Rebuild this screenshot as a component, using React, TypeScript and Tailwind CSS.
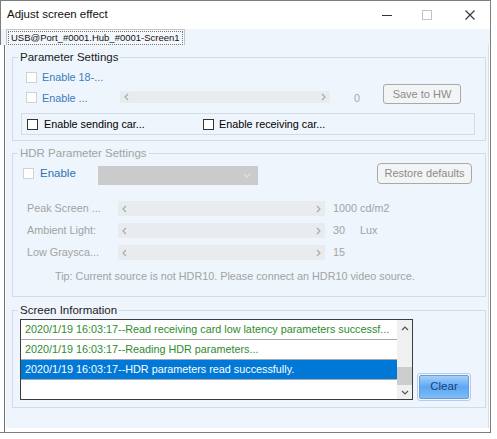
import React from "react";

const font = { fontFamily: '"Liberation Sans", Arial, sans-serif' };

function Chevron({ dir, className }: { dir: "left" | "right" | "up" | "down"; className?: string }) {
  const d = {
    left: "M4 1 L1 4 L4 7",
    right: "M1 1 L4 4 L1 7",
    up: "M1 4 L4 1 L7 4",
    down: "M1 1 L4 4 L7 1",
  }[dir];
  const vertical = dir === "up" || dir === "down";
  return (
    <svg width={vertical ? 8 : 5} height={vertical ? 5 : 8} viewBox={vertical ? "0 0 8 5" : "0 0 5 8"} className={className}>
      <path d={d} fill="none" stroke="currentColor" strokeWidth="1.2" />
    </svg>
  );
}

// disabled scroll-style slider
function Track({ w, h }: { w: string; h: string }) {
  return (
    <div className={`${w} ${h} flex items-center justify-between bg-[#e9ecef] px-[4px] text-[#a9a9a9]`}>
      <Chevron dir="left" />
      <Chevron dir="right" />
    </div>
  );
}

function Box({ dark }: { dark?: boolean }) {
  return dark ? (
    <span className="block h-[11px] w-[11px] shrink-0 border border-[#333] bg-white" />
  ) : (
    <span className="block h-[11px] w-[11px] shrink-0 border border-[#cfd3d7] bg-white" />
  );
}

const logs = [
  "2020/1/19 16:03:17--Read receiving card low latency parameters successf...",
  "2020/1/19 16:03:17--Reading HDR parameters...",
  "2020/1/19 16:03:17--HDR parameters read successfully.",
];

export default function App() {
  return (
    <div className="h-[439px] w-[497px] bg-white text-[10.8px] text-black" style={font}>
      <div className="flex h-[433px] w-[491px] flex-col border-y border-r border-[#7d7d7d]">
        {/* title bar */}
        <div className="flex h-[28px] shrink-0 items-center border-l border-[#7d7d7d] bg-white pl-[6px]">
          <span className="text-[11.5px] text-[#111]">Adjust screen effect</span>
          <div className="ml-auto flex items-center">
            <span className="mr-[30px] block h-px w-[10px] bg-[#333]" />
            <span className="mr-[33px] block h-[10px] w-[10px] border border-[#c4c4c4]" />
            <svg width="10" height="10" viewBox="0 0 10 10" className="mr-[15px]">
              <path d="M0.5 0.5 L9.5 9.5 M9.5 0.5 L0.5 9.5" stroke="#333" strokeWidth="1.1" />
            </svg>
          </div>
        </div>

        {/* tab strip */}
        <div className="flex h-[16px] shrink-0 items-end border-l border-[#7d7d7d] bg-[#eef5fc] pl-[5px]">
          <div className="flex h-[16px] items-center border border-b-0 border-[#c4c4c4] bg-[#f4f8fc] px-[1px]">
            <span className="border border-dotted border-[#777] px-[2px] text-[9.5px] leading-[12px] text-[#111]">
              USB@Port_#0001.Hub_#0001-Screen1
            </span>
          </div>
        </div>

        {/* tab body */}
        <div className="ml-[4px] flex flex-1 border-l border-[#6f6f6f] bg-white pb-[4px] pl-[1px] pr-[1px]">
          <div className="flex flex-1 flex-col border-r border-[#dcdcdc] bg-[#eef5fc] pl-[6px] pr-[2px] pt-[5px]">
            {/* Parameter Settings */}
            <fieldset className="border border-[#d3dce5] pb-[5px] pl-[8px]">
              <legend className="ml-[-3px] px-[2px] text-[11.5px] leading-[14px] text-[#222]">Parameter Settings</legend>
              <div className="mt-[6px] flex h-[14px] items-center pl-[5px]">
                <Box />
                <span className="ml-[5px] text-[#3a7cc2]">Enable 18-...</span>
              </div>
              <div className="flex h-[20px] items-start pl-[5px]">
                <span className="mt-[8px]">
                  <Box />
                </span>
                <span className="ml-[5px] mt-[7px] w-[78px] leading-[14px] text-[#3a7cc2]">Enable ...</span>
                <div className="mt-[7px]">
                  <Track w="w-[210px]" h="h-[12px]" />
                </div>
                <span className="ml-[24px] mt-[7px] w-[29px] leading-[14px] text-[#a8a8a8]">0</span>
                <button className="h-[20px] w-[78px] rounded-[3px] border border-[#a9a9a9] bg-[#f3f4f5] text-[11px] text-[#8c8c8c]">
                  Save to HW
                </button>
              </div>
              <div className="mr-[10px] mt-[9px] flex h-[22px] items-center border border-[#d3dce5] pl-[5px]">
                <Box dark />
                <span className="ml-[6px] w-[159px]">Enable sending car...</span>
                <Box dark />
                <span className="ml-[5px]">Enable receiving car...</span>
              </div>
            </fieldset>

            {/* HDR Parameter Settings */}
            <fieldset className="mt-[5px] border border-[#d3dce5] pb-[13px] pl-[10px]">
              <legend className="ml-[-5px] px-[2px] text-[11.5px] leading-[14px] text-[#a3a3a3]">HDR Parameter Settings</legend>
              <div className="mt-[3px] flex h-[22px] items-start">
                <span className="mt-[5px]">
                  <Box />
                </span>
                <span className="ml-[6px] mt-[3px] w-[58px] text-[11.5px] leading-[14px] text-[#2f70b8]">Enable</span>
                <div className="mt-[3px] flex h-[19px] w-[160px] items-center justify-end bg-[#cbcbcb] pr-[7px] text-[#e2e2e2]">
                  <Chevron dir="down" />
                </div>
                <button className="ml-[119px] h-[21px] w-[95px] rounded-[4px] border border-[#a9a9a9] bg-[#f3f4f5] text-[11px] text-[#8c8c8c]">
                  Restore defaults
                </button>
              </div>
              <div className="mt-[16px] flex flex-col gap-[7px] text-[#a3a3a3]">
                {[
                  ["Peak Screen ...", "1000 cd/m2", ""],
                  ["Ambient Light:", "30", "Lux"],
                  ["Low Graysca...", "15", ""],
                ].map(([label, val, unit]) => (
                  <div key={label} className="flex h-[15px] items-center whitespace-nowrap">
                    <span className="ml-[4px] w-[91px]">{label}</span>
                    <Track w="w-[207px]" h="h-[15px]" />
                    <span className="ml-[8px] w-[27px]">{val}</span>
                    <span>{unit}</span>
                  </div>
                ))}
              </div>
              <div className="ml-[32px] mt-[9px] leading-[14px] text-[#a3a3a3]">
                Tip: Current source is not HDR10. Please connect an HDR10 video source.
              </div>
            </fieldset>

            {/* Screen Information */}
            <fieldset className="mt-[6px] border border-[#d3dce5] pb-[7px] pl-[7px]">
              <legend className="ml-[-2px] px-[2px] text-[11.5px] leading-[14px] text-[#222]">Screen Information</legend>
              <div className="mt-[2px] flex items-end">
                <div className="flex h-[81px] w-[393px] border border-[#3c3c3c] bg-white">
                  <div className="flex min-w-0 flex-1 flex-col overflow-hidden">
                    {logs.map((t, i) => (
                      <div
                        key={i}
                        className={
                          i === 2
                            ? "flex h-[20px] shrink-0 items-center border-b border-[#a9a9a9] bg-[#0078d7] pl-[4px] text-white"
                            : "flex h-[20px] shrink-0 items-center border-b border-[#a9a9a9] pl-[4px] text-[#2e8b2e]"
                        }
                      >
                        <span className="whitespace-nowrap">{t}</span>
                      </div>
                    ))}
                  </div>
                  <div className="flex w-[15px] shrink-0 flex-col items-center bg-[#f0f0f0] text-[#555]">
                    <div className="flex h-[16px] items-center">
                      <Chevron dir="up" />
                    </div>
                    <div className="mt-[31px] h-[18px] w-[15px] bg-[#cdcdcd]" />
                    <div className="mt-auto flex h-[14px] items-center">
                      <Chevron dir="down" />
                    </div>
                  </div>
                </div>
                <div className="mb-[-1px] ml-[4px] rounded-[3px] border border-[#b3cdea] p-px">
                  <button className="h-[24px] w-[50px] rounded-[2px] border border-[#6d9ad6] bg-gradient-to-b from-[#a6d0f8] via-[#5aa8f3] to-[#7fbcf7] text-[11.5px] text-[#1b3f7f]">
                    Clear
                  </button>
                </div>
              </div>
            </fieldset>
          </div>
        </div>
      </div>
    </div>
  );
}
